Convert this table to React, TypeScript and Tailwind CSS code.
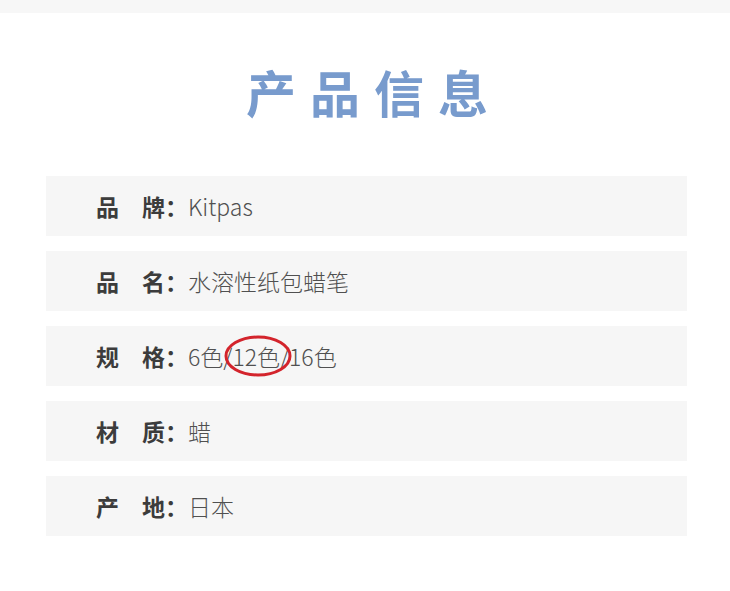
const rows = [
  { label: '品　牌：', value: 'Kitpas' },
  { label: '品　名：', value: '水溶性纸包蜡笔' },
  { label: '规　格：', value: '6色/12色/16色', circled: true },
  { label: '材　质：', value: '蜡' },
  { label: '产　地：', value: '日本' },
];

function SpecValue({ value, circled }: { value: string; circled?: boolean }) {
  if (!circled) return <span>{value}</span>;
  return (
    <span>
      6色/
      <span className="relative">
        12色
        <svg className="absolute left-[-8px] top-[-4px] overflow-visible" width="68" height="42" viewBox="0 0 68 42">
          <ellipse cx="34" cy="21" rx="32" ry="19" fill="none" stroke="#d3242c" strokeWidth="3" />
        </svg>
      </span>
      /16色
    </span>
  );
}

export default function App() {
  return (
    <div className="w-[730px] h-[591px] bg-white overflow-hidden font-['Noto_Sans_CJK_SC',sans-serif]">
      <div className="h-[13px] bg-[#f7f7f7]" />
      <h1 className="mt-[53px] pl-[18px] text-center text-[50px] leading-none font-bold tracking-[14px] text-[#789bcd]">
        产品信息
      </h1>
      <div className="mt-[60px] ml-[46px] mr-[43px] flex flex-col gap-[15px]">
        {rows.map((row) => (
          <div key={row.label} className="h-[60px] bg-[#f6f6f6] flex items-center pl-[50px] text-[23px]">
            <span className="font-bold text-[#3c3c3c]">{row.label}</span>
            <span className="font-light text-[#505050]">
              <SpecValue value={row.value} circled={row.circled} />
            </span>
          </div>
        ))}
      </div>
    </div>
  );
}
